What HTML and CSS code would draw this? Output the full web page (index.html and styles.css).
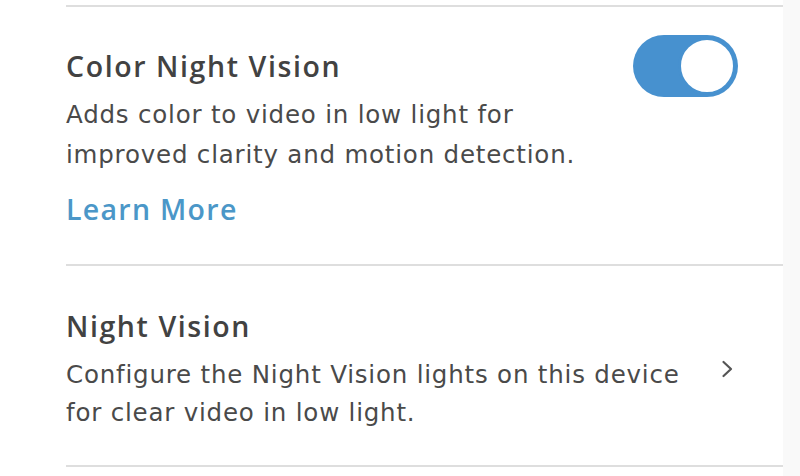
FILE: index.html
```html
<!DOCTYPE html>
<html>
<head>
<meta charset="utf-8">
<link rel="stylesheet" href="styles.css">
</head>
<body>
<div class="page">
  <div class="list">
    <div class="row row-toggle">
      <div class="text">
        <div class="title">Color Night Vision</div>
        <div class="desc">Adds color to video in low light for<br>improved clarity and motion detection.</div>
        <div class="link">Learn More</div>
      </div>
      <div class="toggle"><div class="knob"></div></div>
    </div>
    <div class="row row-nav">
      <div class="text">
        <div class="title">Night Vision</div>
        <div class="desc">Configure the Night Vision lights on this device<br>for clear video in low light.</div>
      </div>
      <svg class="chevron" width="14" height="18" viewBox="0 0 14 18"><path d="M2.5 2 L10 9 L2.5 16" fill="none" stroke="#555" stroke-width="2.2" stroke-linecap="round" stroke-linejoin="round"/></svg>
    </div>
  </div>
</div>
</body>
</html>
```
FILE: styles.css
```css
html, body {
  margin: 0;
  padding: 0;
  background: #f9f9f9;
}
.page {
  width: 783px;
  height: 476px;
  background: #ffffff;
  padding-top: 5px;
  box-sizing: border-box;
  font-family: "Open Sans", Lato, sans-serif;
}
.list {
  margin-left: 66px;
  border-top: 2px solid #dedede;
}
.row {
  display: flex;
  border-bottom: 2px solid #dedede;
}
.text {
  flex: 1;
}
.title {
  font-size: 28.5px;
  line-height: 36px;
  font-weight: 600;
  color: #424242;
  letter-spacing: 1.6px;
}
.desc {
  font-family: "DejaVu Sans", "Open Sans", sans-serif;
  font-size: 24.5px;
  line-height: 40px;
  color: #4a4a4a;
  letter-spacing: 0.8px;
  margin-top: 11px;
}
.link {
  font-size: 28.5px;
  line-height: 36px;
  font-weight: 600;
  color: #4b97c8;
  margin-top: 16px;
  letter-spacing: 1.3px;
}
.row-toggle {
  padding-top: 41px;
  height: 259px;
  box-sizing: border-box;
}
.toggle {
  width: 105px;
  height: 62px;
  border-radius: 31px;
  background: #4791cf;
  margin-top: -13px;
  margin-right: 45px;
  display: flex;
  justify-content: flex-end;
  align-items: center;
  padding-right: 2px;
  box-sizing: border-box;
}
.knob {
  width: 58px;
  height: 58px;
  border-radius: 50%;
  background: #fff;
  border: 3px solid #4791cf;
  box-sizing: border-box;
}
.row-nav {
  padding-top: 42px;
  height: 201px;
  box-sizing: border-box;
}
.row-nav .desc {
  line-height: 38px;
  margin-top: 12px;
}
.chevron {
  margin-right: 48px;
  margin-top: 52px;
}
```
